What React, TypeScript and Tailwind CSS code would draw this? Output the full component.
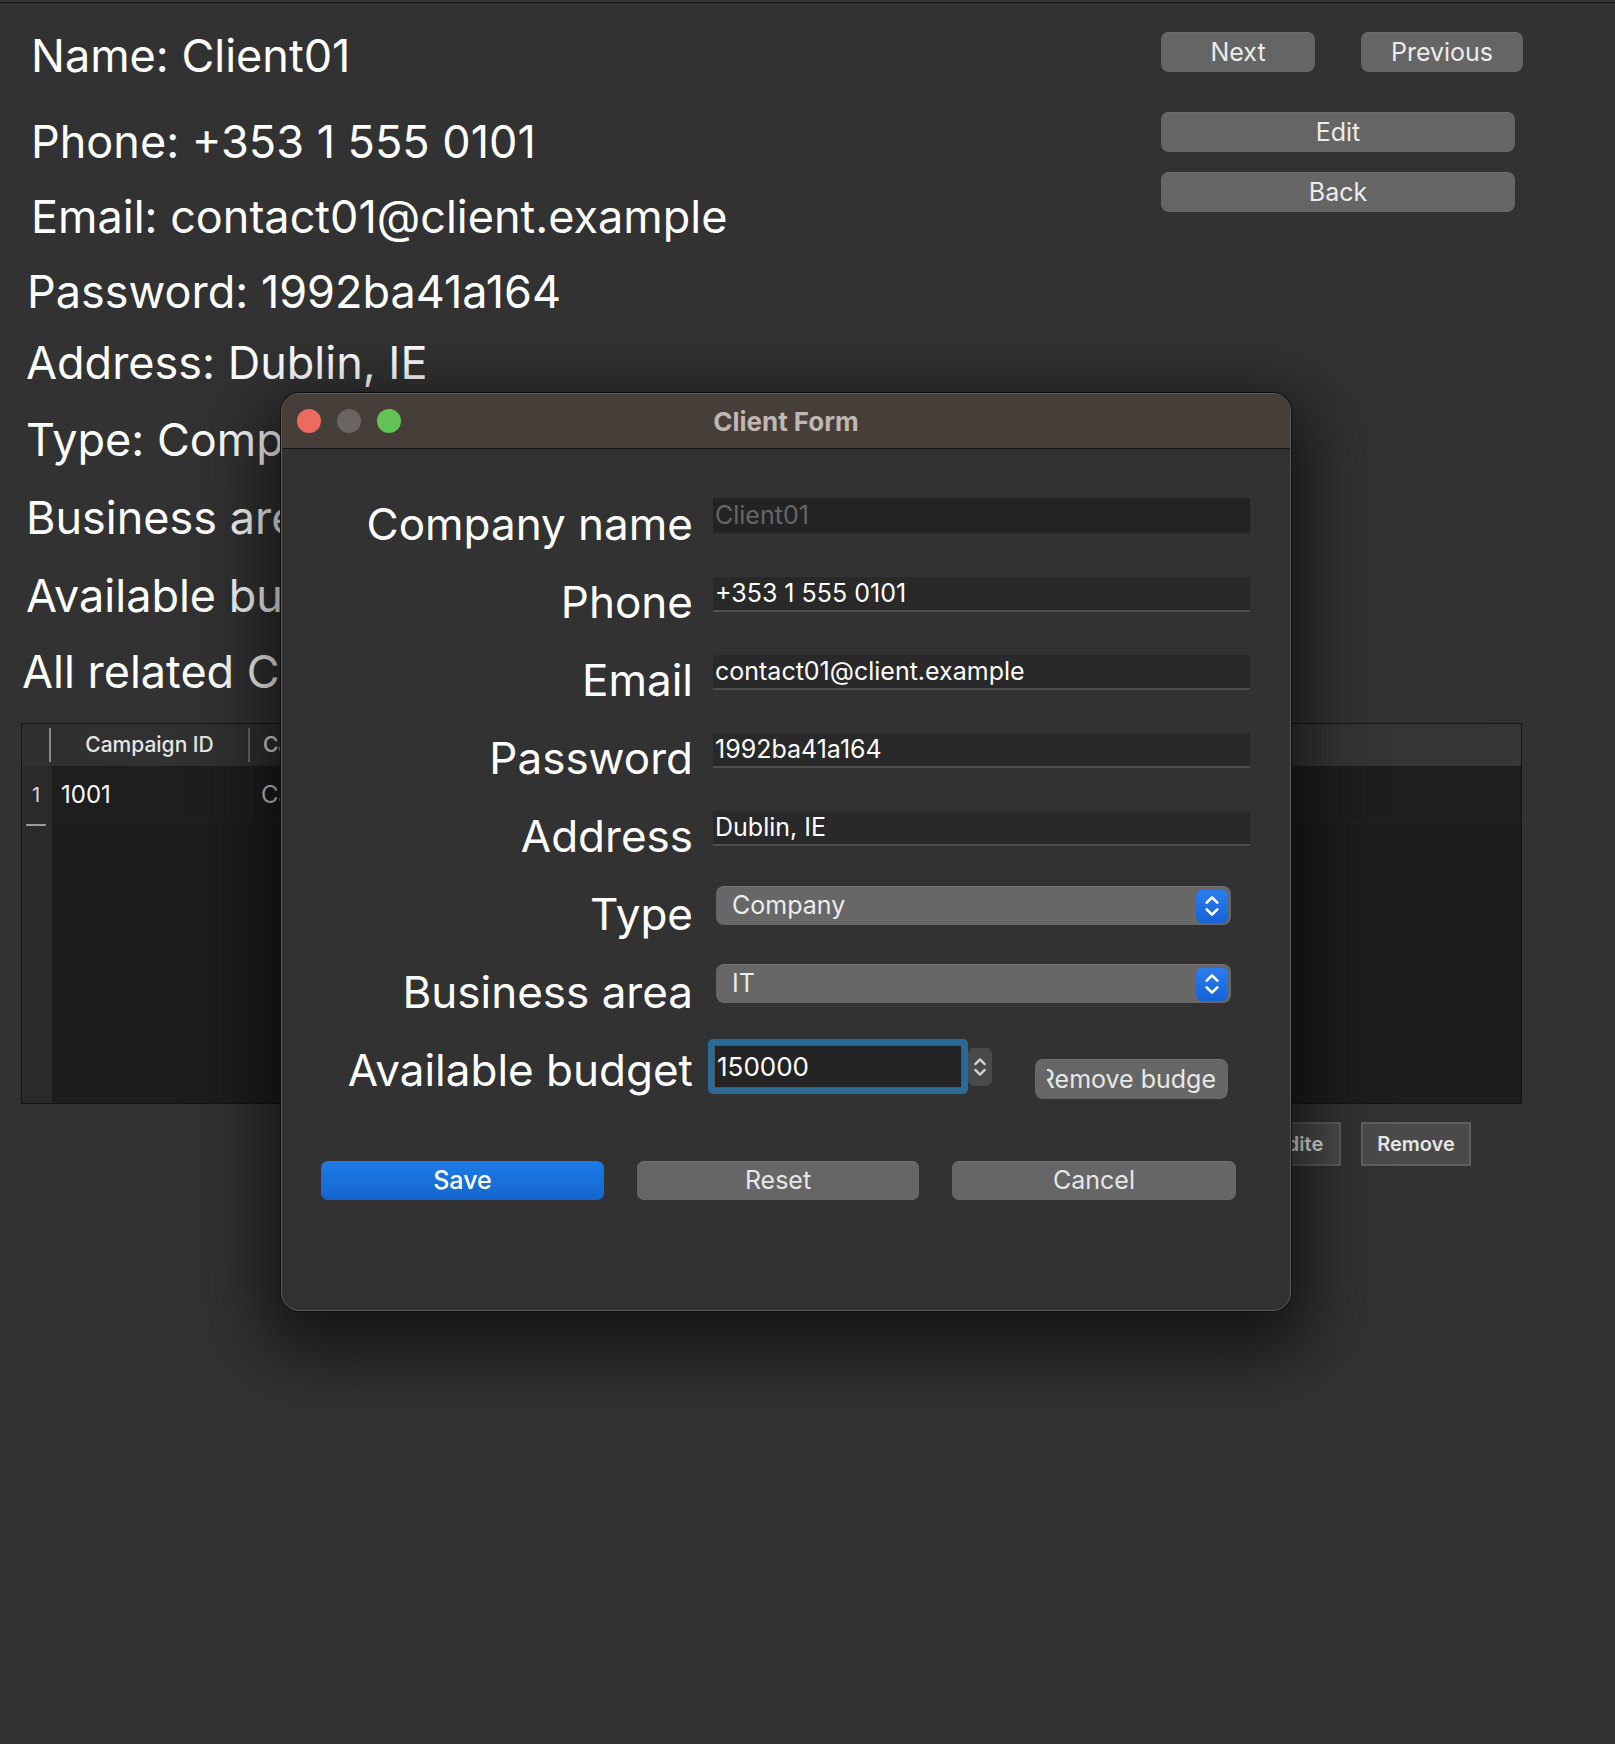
import React from "react";

const lines = [
  { text: "Name: Client01", cls: "mt-[23px] pl-[31px]" },
  { text: "Phone: +353 1 555 0101", cls: "mt-[26px] pl-[31px]" },
  { text: "Email: contact01@client.example", cls: "mt-[15px] pl-[31px]" },
  { text: "Password: 1992ba41a164", cls: "mt-[15px] pl-[27px]" },
  { text: "Address: Dublin, IE", cls: "mt-[11px] pl-[26px]" },
  { text: "Type: Company", cls: "mt-[17px] pl-[26px]" },
  { text: "Business area: IT", cls: "mt-[18px] pl-[26px]" },
  { text: "Available budget: 150000", cls: "mt-[18px] pl-[26px]" },
  { text: "All related Campaigns", cls: "mt-[16px] pl-[22px]" },
];

const Chevrons = ({ className }: { className?: string }) => (
  <svg viewBox="0 0 12 20" className={className} fill="none" stroke="currentColor" strokeWidth="2" strokeLinecap="round" strokeLinejoin="round">
    <path d="M2 7.5 6 3.5l4 4" />
    <path d="M2 12.5 6 16.5l4-4" />
  </svg>
);

const Label = ({ children }: { children: React.ReactNode }) => (
  <div className="w-[411px] mt-[10px] h-[50px] leading-[50px] text-right text-[44px] text-white whitespace-nowrap">{children}</div>
);

const TextRow = ({ label, value, dim }: { label: string; value: string; dim?: boolean }) => (
  <div className="flex h-[78px]">
    <Label>{label}</Label>
    <div
      className={
        dim
          ? "ml-[20px] mt-[9px] h-[36px] w-[537px] bg-[#232323] border-b border-[#2e2e2e] flex items-center px-[2px] text-[25px] text-[#666]"
          : "ml-[20px] mt-[9px] h-[36px] w-[537px] bg-[#292929] border-t border-[#333] border-b-2 border-b-[#4d4d4d] flex items-center px-[2px] text-[25px] text-white"
      }
    >
      {value}
    </div>
  </div>
);

const SelectRow = ({ label, value }: { label: string; value: string }) => (
  <div className="flex h-[78px]">
    <Label>{label}</Label>
    <div className="ml-[23px] mt-[7px] h-[39px] w-[515px] rounded-[8px] bg-[#676767] border-t border-[#747474] flex items-center justify-between pl-[16px] pr-[3px] text-[25px] text-[#ececec]">
      <span>{value}</span>
      <div className="w-[32px] h-[33px] rounded-[6px] bg-gradient-to-b from-[#2a7df0] to-[#1563d6] flex items-center justify-center text-white">
        <Chevrons className="w-[16px] h-[28px]" />
      </div>
    </div>
  </div>
);

export default function App() {
  return (
    <div className="relative min-h-screen w-[1615px] h-[1744px] bg-[#323232] text-white font-['Inter','Liberation_Sans',sans-serif] overflow-hidden">
      <div className="h-[2px] bg-[#3d342f]" />
      <div className="h-[1px] bg-[#141414]" />

      <div className="flex">
        <div className="flex-1 flex flex-col">
          {lines.map((l) => (
            <div key={l.text} className={"h-[60px] flex items-center text-[45px] whitespace-nowrap " + l.cls}>
              {l.text}
            </div>
          ))}
        </div>
        <div className="w-[362px] mr-[92px] pt-[29px] flex flex-col text-[25px] text-[#ececec]">
          <div className="flex justify-between">
            <div className="w-[154px] h-[40px] rounded-[8px] bg-[#656565] border-t border-[#707070] flex items-center justify-center">Next</div>
            <div className="w-[162px] h-[40px] rounded-[8px] bg-[#656565] border-t border-[#707070] flex items-center justify-center">Previous</div>
          </div>
          <div className="mt-[40px] w-[354px] h-[40px] rounded-[8px] bg-[#656565] border-t border-[#707070] flex items-center justify-center">Edit</div>
          <div className="mt-[20px] w-[354px] h-[40px] rounded-[8px] bg-[#656565] border-t border-[#707070] flex items-center justify-center">Back</div>
        </div>
      </div>

      {/* campaigns table */}
      <div className="ml-[21px] mt-[21px] w-[1501px] h-[381px] border border-[#141414] bg-[#1d1d1d] flex flex-col">
        <div className="h-[42px] flex bg-gradient-to-r from-[#303030] to-[#363636] text-[21px] font-medium text-[#e6e6e6]">
          <div className="w-[29px] border-r-2 border-[#8a8a8a] my-[4px]" />
          <div className="w-[199px] flex items-center justify-center border-r-2 border-[#6a6a6a] my-[4px]">Campaign ID</div>
          <div className="w-[30px] flex items-center pl-[13px] overflow-hidden whitespace-nowrap my-[4px]">Campaign name</div>
        </div>
        <div className="flex-1 flex">
          <div className="w-[30px] bg-[#2a2a2a] flex flex-col">
            <div className="h-[58px] flex items-center pl-[10px] text-[20px] text-[#dcdcdc]">1</div>
            <div className="ml-[4px] w-[20px] h-[2px] bg-[#9a9a9a]" />
          </div>
          <div className="flex-1 flex flex-col">
            <div className="h-[58px] flex items-center border-b border-[#222] text-[24px] bg-[#1e1e1e]">
              <div className="w-[199px] pl-[9px] border-r border-[#252525] h-full flex items-center">1001</div>
              <div className="w-[30px] pl-[10px] overflow-hidden whitespace-nowrap text-[#d0d0d0]">Campaign Spring</div>
            </div>
          </div>
        </div>
      </div>

      <div className="flex justify-end w-[1471px] mt-[18px] gap-[20px] text-[20px] font-semibold text-[#e6e6e6]">
        <div className="w-[84px] h-[44px] bg-[#4a4a4a] border-2 border-[#5e5e5e] flex items-center justify-center">Edite</div>
        <div className="w-[110px] h-[44px] bg-[#4a4a4a] border-2 border-[#5e5e5e] flex items-center justify-center">Remove</div>
      </div>

      {/* Client Form window */}
      <div className="absolute left-[281px] top-[393px] w-[1010px] h-[918px] rounded-[18px] bg-[#323232] border border-[#5c5c5c] shadow-[0_0_0_1px_#111,0_24px_70px_18px_rgba(0,0,0,0.6)] overflow-hidden">
        <div className="h-[55px] bg-[#463e39] border-b border-[#151515] grid grid-cols-[1fr_auto_1fr] items-center">
          <div className="flex gap-[16px] pl-[15px]">
            <div className="w-[24px] h-[24px] rounded-full bg-[#ed6a5e]" />
            <div className="w-[24px] h-[24px] rounded-full bg-[#6a6562]" />
            <div className="w-[24px] h-[24px] rounded-full bg-[#61c454]" />
          </div>
          <div className="text-[26px] font-bold text-[#bfb7b2]">Client Form</div>
          <div />
        </div>

        <div className="pt-[40px] flex flex-col">
          <TextRow label="Company name" value="Client01" dim />
          <TextRow label="Phone" value="+353 1 555 0101" />
          <TextRow label="Email" value="contact01@client.example" />
          <TextRow label="Password" value="1992ba41a164" />
          <TextRow label="Address" value="Dublin, IE" />
          <SelectRow label="Type" value="Company" />
          <SelectRow label="Business area" value="IT" />

          <div className="flex h-[78px]">
            <Label>Available budget</Label>
            <div className="ml-[15px] mt-[4px] w-[260px] h-[55px] rounded-[5px] bg-[#2a6a96] p-[6px]">
              <div className="h-full bg-[#242424] border border-[#555] flex items-center pl-[2px] text-[26px] text-white">150000</div>
            </div>
            <div className="mt-[13px] w-[24px] h-[38px] rounded-[6px] bg-[#4a4a4a] flex items-center justify-center text-[#d0d0d0]">
              <Chevrons className="w-[14px] h-[34px]" />
            </div>
            <div className="ml-[43px] mt-[24px] w-[193px] h-[40px] rounded-[8px] bg-[#666] border-t border-[#727272] flex items-center">
              <div className="mx-[12px] flex-1 h-full overflow-hidden flex items-center justify-center whitespace-nowrap text-[25px] text-[#e8e8e8]">
                Remove budget
              </div>
            </div>
          </div>

          <div className="mt-[48px] ml-[39px] flex gap-[33px] text-[25px]">
            <div className="w-[283px] h-[39px] rounded-[7px] bg-gradient-to-b from-[#1c7ce8] to-[#1565cc] flex items-center justify-center font-medium text-white">Save</div>
            <div className="w-[282px] h-[39px] rounded-[7px] bg-[#666] border-t border-[#727272] flex items-center justify-center text-[#e6e6e6]">Reset</div>
            <div className="w-[284px] h-[39px] rounded-[7px] bg-[#666] border-t border-[#727272] flex items-center justify-center text-[#e6e6e6]">Cancel</div>
          </div>
        </div>
      </div>
    </div>
  );
}
